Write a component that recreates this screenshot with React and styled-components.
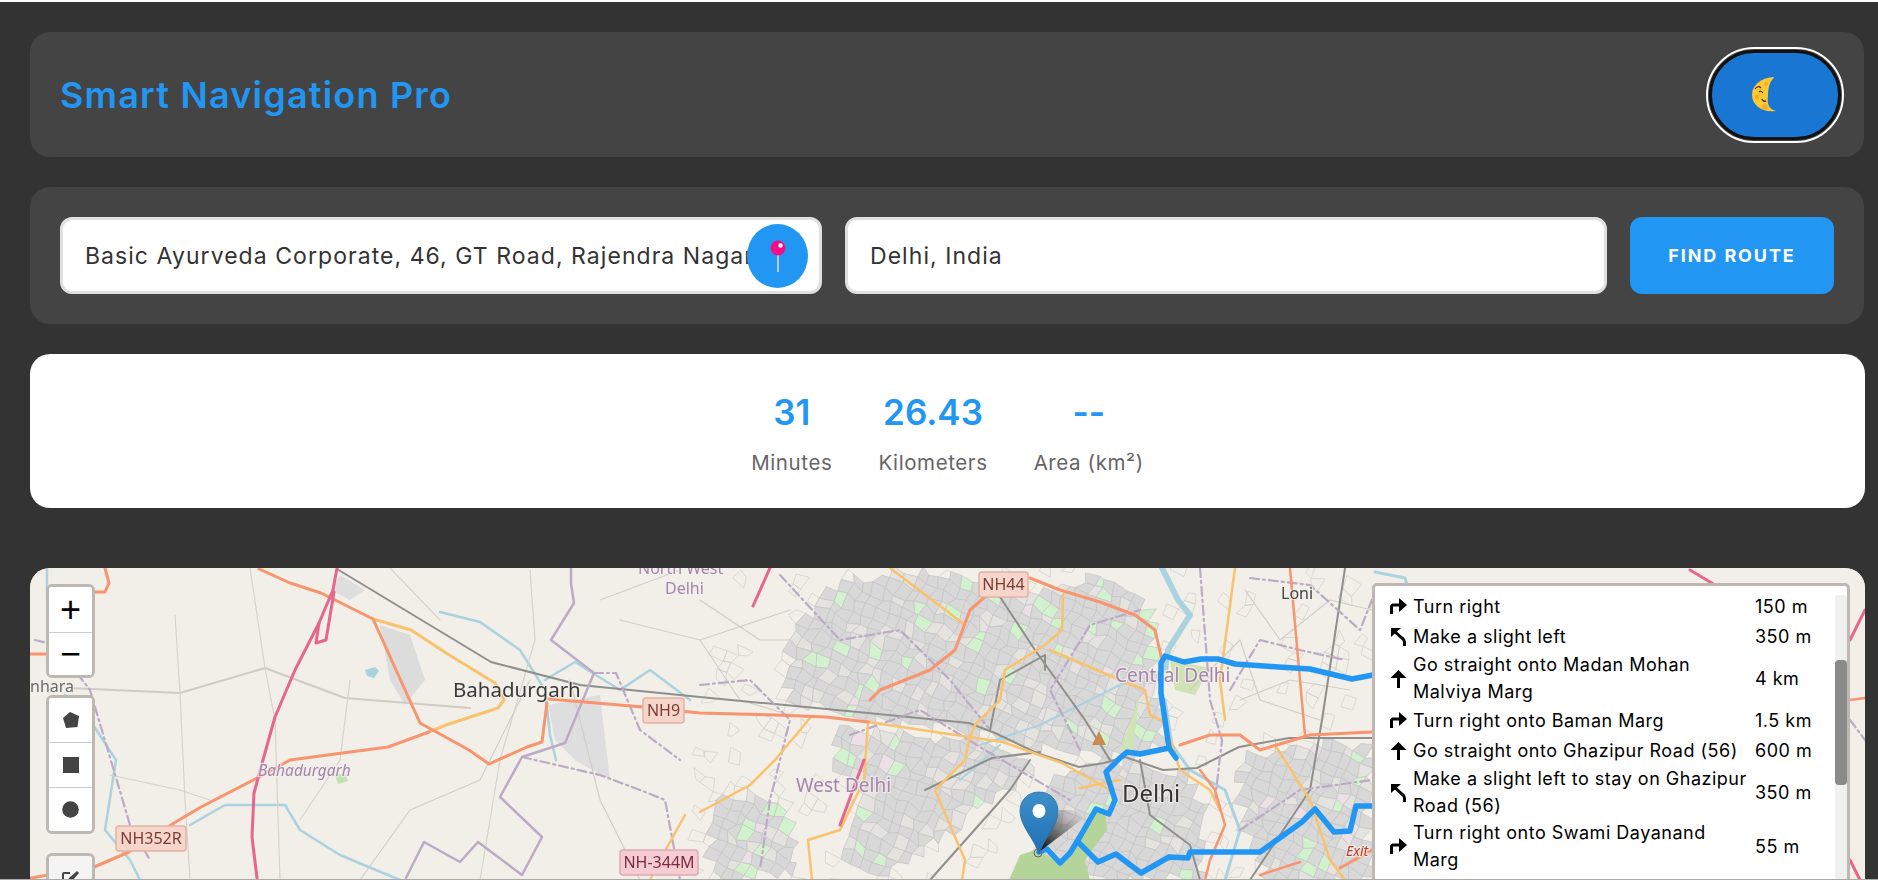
import { useMemo } from "react";
import styled, { createGlobalStyle } from "styled-components";

const FONT = `"Inter", "Noto Sans", sans-serif`;

const GlobalStyle = createGlobalStyle`
  html, body {
    margin: 0;
    padding: 0;
    background: #333;
    overflow: hidden;
  }
  * { box-sizing: border-box; }
`;

const Page = styled.div`
  width: 1878px;
  height: 880px;
  overflow: hidden;
  background: #333;
  border-top: 2px solid #fff;
  border-bottom: 1px solid #aaa;
  padding: 30px 13px 0 30px;
  display: flex;
  flex-direction: column;
  gap: 30px;
  font-family: ${FONT};
`;

const Panel = styled.div`
  flex: none;
  background: #444;
  border-radius: 20px;
  display: flex;
  align-items: center;
  padding: 0 30px;
  margin-right: 1px;
`;

const Header = styled(Panel)`
  height: 125px;
  justify-content: space-between;
  padding-right: 23px;
`;

const Title = styled.h1`
  margin: 0;
  font-size: 36px;
  font-weight: 600;
  letter-spacing: 1.2px;
  color: #2196f3;
`;

const ThemeToggle = styled.button`
  width: 132px;
  height: 90px;
  padding: 0 0 0 39px;
  display: flex;
  align-items: center;
  border: 3px solid #111;
  border-radius: 45px;
  outline: 2px solid #fff;
  outline-offset: 1px;
  background: #1976d2;
`;

const SearchBar = styled(Panel)`
  height: 137px;
  gap: 23px;
`;

const Field = styled.div`
  position: relative;
  flex: none;
  width: 762px;
  height: 77px;
`;

const Input = styled.input`
  width: 100%;
  height: 100%;
  border: 3px solid #e0e0e0;
  border-radius: 12px;
  background: #fff;
  padding: 0 ${(props) => (props.$pinned ? "71px" : "20px")} 0 22px;
  font-family: ${FONT};
  font-size: 23px;
  letter-spacing: 1.05px;
  color: #333;
  outline: none;
`;

const PinButton = styled.button`
  position: absolute;
  top: 7px;
  right: 14px;
  width: 61px;
  height: 64px;
  padding: 0;
  border: none;
  border-radius: 50%;
  background: #2196f3;
  display: flex;
  align-items: center;
  justify-content: center;
`;

const FindButton = styled.button`
  flex: none;
  width: 204px;
  height: 77px;
  border: none;
  border-radius: 12px;
  background: #2196f3;
  color: #fff;
  font-family: ${FONT};
  font-size: 18px;
  font-weight: 700;
  letter-spacing: 1.9px;
`;

const Stats = styled.div`
  flex: none;
  height: 154px;
  background: #fff;
  border-radius: 20px;
  display: flex;
  justify-content: center;
  gap: 46px;
  padding-top: 33px;
`;

const Stat = styled.div`
  display: flex;
  flex-direction: column;
  align-items: center;
`;

const StatValue = styled.div`
  font-size: 35px;
  line-height: 50px;
  font-weight: 600;
  color: #2196f3;
`;

const StatLabel = styled.div`
  margin-top: 11px;
  font-size: 20.5px;
  letter-spacing: 0.6px;
  line-height: 30px;
  color: #666;
`;

const MapFrame = styled.div`
  position: relative;
  flex: none;
  margin-top: 30px;
  height: 340px;
  border-radius: 20px 20px 0 0;
  overflow: hidden;
  background: #f2efe9;
`;

const MapCanvas = styled.svg`
  display: block;
  width: 100%;
  height: 100%;
  filter: blur(0.7px);
`;

const Controls = styled.div`
  position: absolute;
  top: 16px;
  left: 16px;
  display: flex;
  flex-direction: column;
  gap: 17px;
`;

const ControlGroup = styled.div`
  width: 49px;
  margin-top: ${(props) => props.$top || 0}px;
  border: 3px solid #bdb9b2;
  border-radius: 6px;
  background: #fff;
  overflow: hidden;
`;

const ControlButton = styled.div`
  height: ${(props) => props.$h}px;
  display: flex;
  align-items: center;
  justify-content: center;
  background: ${(props) => (props.$muted ? "#f4f4f4" : "#fff")};
  color: #000;
  font-family: "Liberation Sans", sans-serif;
  font-size: 36px;
  & + & {
    border-top: 1px solid #ccc;
  }
`;

const RoutePanel = styled.div`
  position: absolute;
  top: 15px;
  left: 1342px;
  width: 478px;
  height: 320px;
  display: flex;
  background: #fff;
  border: 3px solid #bdb9b2;
  border-radius: 5px 5px 0 0;
  padding: 5px 0 0 15px;
  color: #000;
  font-size: 18px;
  letter-spacing: 0.5px;
`;

const RouteList = styled.div`
  flex: 1;
  display: flex;
  flex-direction: column;
`;

const RouteRow = styled.div`
  display: grid;
  grid-template-columns: 23px 342px 1fr;
  align-items: center;
  min-height: 30px;
`;

const RouteText = styled.div`
  line-height: 27px;
  white-space: nowrap;
`;

const Distance = styled.div`
  line-height: 27px;
  white-space: nowrap;
`;

const ScrollTrack = styled.div`
  flex: none;
  width: 12px;
  margin-top: 4px;
  background: #f0f0f0;
  border-radius: 3px;
  padding-top: 65px;
`;

const ScrollThumb = styled.div`
  height: 125px;
  background: #8a8a8a;
  border-radius: 4px;
`;

// main roads and lines, in page pixels
const LINES = [
  // rivers and canals
  ["#aad3df", 2.5, null, "47,568 47,600 62,610"],
  ["#aad3df", 2.5, null, "440,612 480,622 520,650 545,690 550,735 556,760"],
  ["#aad3df", 2.5, null, "65,695 90,720 116,760 105,830 130,860 140,880"],
  ["#aad3df", 2.5, null, "190,825 225,805 285,805 300,830 340,855 400,880"],
  ["#aad3df", 2.5, null, "545,680 575,662 620,690 650,670 690,700"],
  ["#aad3df", 6, null, "1162,568 1178,600 1190,615 1168,650 1165,670"],
  ["#aad3df", 3, null, "1165,700 1172,745 1190,770 1225,790 1240,830 1225,880"],
  ["#aad3df", 3, null, "1375,572 1405,578 1412,600"],
  ["#aad3df", 2, null, "980,745 1040,725 1090,700 1130,680"],
  ["#aad3df", 2, null, "960,780 1000,745"],
  // minor grey roads outside the city
  ["#cfccc6", 2, null, "70,688 180,693 265,668 345,698 470,708"],
  ["#d6d3cd", 1.2, null, "250,568 265,668 275,720 280,880"],
  ["#d6d3cd", 1.2, null, "175,615 180,693 185,800 190,880"],
  ["#d6d3cd", 1.2, null, "530,570 535,640 500,760 480,880"],
  ["#cfcfc9", 1.2, null, "530,680 480,780 410,810 360,880"],
  ["#cfcfc9", 1.2, null, "570,680 600,800 640,880"],
  ["#d6d3cd", 1.2, null, "110,775 180,790 210,800"],
  ["#d6d3cd", 1.2, null, "390,568 440,620"],
  ["#d6d3cd", 1.2, null, "350,680 340,760 300,820"],
  ["#cfcfc9", 1.2, null, "600,600 680,570"],
  ["#cfcfc9", 1.2, null, "620,620 700,640 790,610"],
  ["#cfcfc9", 1.2, null, "1245,590 1280,640 1330,600 1372,610"],
  ["#cfcfc9", 1.2, null, "1240,700 1290,680 1350,690"],
  ["#cfcfc9", 1.2, null, "1190,690 1240,640 1260,700 1320,720"],
  ["#cfcfc9", 1.2, null, "700,600 760,640 790,640"],
  ["#cfcfc9", 1.2, null, "700,640 740,700 780,712"],
  // rail
  ["#8f8f8c", 2, null, "337,569 491,662 580,685 700,697 868,713 969,723 995,733 1037,753 1079,767 1104,763 1125,757 1163,770 1197,768 1239,747 1289,738 1372,738"],
  ["#8f8f8c", 2, null, "1000,597 1035,650 1085,720 1110,760"],
  ["#8f8f8c", 2, null, "925,790 992,758 1040,752"],
  ["#8f8f8c", 2, null, "930,880 1010,790 1030,760"],
  ["#8f8f8c", 2, null, "1345,568 1322,720 1310,790 1250,880"],
  ["#8f8f8c", 2, null, "990,730 1000,680 1045,655 1045,670"],
  ["#8f8f8c", 2, null, "1140,760 1150,815 1190,845 1200,880"],
  // admin boundaries
  ["#bcaac6", 2.5, null, "571,568 571,583 574,603 551,640 594,673 565,743 522,757 500,797 542,837 522,875 478,842 460,862 424,842 406,878"],
  ["#bcaac6", 2.2, "9 4 2 4", "35,640 55,645 90,690 130,825 150,860"],
  ["#bcaac6", 2.2, "9 4 2 4", "522,757 600,775 640,790 665,800 680,880"],
  ["#bcaac6", 2.2, "9 4 2 4", "594,673 616,673 640,730 680,760"],
  ["#bcaac6", 2.2, "9 4 2 4", "700,685 750,680 790,720 770,800 760,870"],
  ["#bcaac6", 2.2, "9 4 2 4", "780,575 840,640 900,630 950,680 990,730"],
  ["#bcaac6", 2.2, "9 4 2 4", "850,735 920,710 985,750 1070,800"],
  ["#bcaac6", 2.2, "9 4 2 4", "1080,750 1050,690 1090,625 1140,610"],
  ["#bcaac6", 2.2, "9 4 2 4", "1200,568 1210,700 1222,740 1215,800"],
  ["#bcaac6", 2.2, "9 4 2 4", "1250,578 1310,585 1360,630 1372,600"],
  ["#bcaac6", 2.2, "9 4 2 4", "1230,690 1260,640 1300,650 1345,660"],
  ["#bcaac6", 2.2, "9 4 2 4", "1240,830 1300,790 1372,780"],
  ["#bcaac6", 2.2, "9 4 2 4", "1850,720 1865,740"],
  // secondary (yellow)
  ["#f9c26d", 3, null, "373,619 411,630 446,653 495,683 504,700 498,708 446,725 429,732"],
  ["#f9c26d", 2.5, null, "868,722 969,737 1003,742 1062,763 1110,790"],
  ["#f9c26d", 2.5, null, "890,568 965,625"],
  ["#f9c26d", 2.5, null, "1063,595 1062,630 1045,645 1005,670 1000,700 975,725 969,740 965,760 935,790 965,860 962,880"],
  ["#f9c26d", 2.5, null, "1050,650 1120,680 1145,690 1150,715 1165,722 1180,770 1210,790 1220,810"],
  ["#f9c26d", 2.5, null, "868,722 864,780 840,830 808,840 812,880"],
  ["#f9c26d", 2.5, null, "810,718 775,760 750,785 700,812"],
  ["#f9c26d", 2.5, null, "1235,568 1220,680 1225,720"],
  ["#f9c26d", 2.5, null, "1275,745 1310,800 1330,860 1345,880"],
  ["#f9c26d", 2.5, null, "685,815 660,860 650,880"],
  ["#f9c26d", 2.5, null, "1080,788 1120,780"],
  // trunk (orange)
  ["#f8946e", 3, null, "105,568 109,583 105,592 94,592"],
  ["#f8946e", 3, null, "30,654 47,654"],
  ["#f8946e", 3, null, "259,569 290,583 321,593 373,619 420,723 469,750 489,764 527,747 542,742 547,703"],
  ["#f8946e", 3, null, "549,699 643,707 700,713 776,715 826,717 868,722"],
  ["#f8946e", 3, null, "429,732 388,747 290,760 259,777 201,807 174,823 129,852 94,867 31,878"],
  ["#f8946e", 3, null, "1030,578 1060,590 1100,602 1135,615 1155,630 1162,660"],
  ["#f8946e", 3, null, "870,700 880,690 930,670 955,650 970,610 985,597 1000,590"],
  ["#f8946e", 3, null, "1180,745 1210,735 1240,735 1260,750 1310,735 1372,732"],
  ["#f8946e", 2.5, null, "1290,568 1300,680 1305,735"],
  ["#f8946e", 2.5, null, "1200,770 1215,790 1225,825 1210,860 1205,880"],
  ["#f8946e", 2.5, null, "1260,875 1300,862"],
  ["#f8946e", 2.5, null, "1850,700 1865,698"],
  ["#f8946e", 3, null, "1340,868 1372,850"],
  // motorway (pink)
  ["#e8668c", 3, null, "337,568 333,590 319,623 295,670 275,717 263,760 254,793 252,837 257,878"],
  ["#e8668c", 3, null, "334,592 326,640 316,643 319,623"],
  ["#e8668c", 3, null, "770,568 753,606"],
  ["#e8668c", 3, null, "864,760 840,825"],
  ["#e8668c", 3, null, "1850,640 1865,610"],
  ["#e8668c", 3, null, "1690,570 1715,585"],
  ["#e8668c", 3, null, "1850,860 1860,880"],
];

const ROUTE = [
  "1039,852 1047,849 1060,863 1070,853 1081,835 1096,809 1109,814 1115,800 1106,772 1121,757 1127,752 1140,754 1169,748 1176,758",
  "1169,748 1165,720 1161,693 1161,663 1165,656 1184,662 1201,659 1218,659 1235,664 1310,669 1352,679 1373,675",
  "1079,843 1098,862 1116,854 1141,873 1169,857 1188,858 1190,852 1260,852 1302,822 1315,809 1334,832 1350,831 1356,806 1373,806",
];

const SHIELDS = [
  { x: 979, y: 572, w: 49, label: "NH44", fill: "#f6d6ca", line: "#e2b3a4", color: "#7c3b32" },
  { x: 643, y: 698, w: 41, label: "NH9", fill: "#f6d6ca", line: "#e2b3a4", color: "#7c3b32" },
  { x: 116, y: 826, w: 70, label: "NH352R", fill: "#f6d6ca", line: "#e2b3a4", color: "#7c3b32" },
  { x: 620, y: 850, w: 78, label: "NH-344M", fill: "#f4ccd2", line: "#dfa9b3", color: "#7d2b3e" },
];

const LABELS = [
  { x: 453, y: 697, size: 20.5, color: "#3a3a3a", text: "Bahadurgarh" },
  { x: 30, y: 692, size: 16, color: "#6a6a6a", text: "nhara" },
  { x: 258, y: 776, size: 15.5, color: "#a584ad", italic: true, text: "Bahadurgarh" },
  { x: 638, y: 574, size: 16, color: "#a584ad", text: "North West" },
  { x: 665, y: 594, size: 16, color: "#a584ad", text: "Delhi" },
  { x: 796, y: 792, size: 19, color: "#a584ad", text: "West Delhi" },
  { x: 1115, y: 682, size: 19, color: "#a584ad", text: "Central Delhi" },
  { x: 1122, y: 802, size: 24, color: "#333", text: "Delhi" },
  { x: 1281, y: 599, size: 16, color: "#444", text: "Loni" },
  { x: 1346, y: 856, size: 14, color: "#c0392b", italic: true, text: "Exit" },
];

// built-up areas of the city
const URBAN = [
  [[790, 640], [830, 590], [900, 570], [1020, 590], [1060, 590], [1090, 570], [1150, 610], [1160, 700], [1165, 745], [1130, 757], [1040, 750], [985, 735], [880, 720], [790, 700]],
  [[835, 725], [985, 745], [1040, 765], [990, 800], [930, 850], [880, 880], [840, 860], [860, 800], [835, 770]],
  [[712, 810], [750, 790], [790, 810], [795, 870], [712, 880]],
  [[1060, 770], [1120, 760], [1180, 775], [1205, 800], [1200, 880], [1050, 880], [1030, 820]],
  [[1240, 760], [1300, 745], [1372, 745], [1372, 880], [1270, 880], [1240, 830]],
];

const inside = (poly, x, y) => {
  let hit = false;
  for (let i = 0, j = poly.length - 1; i < poly.length; j = i++) {
    const [xi, yi] = poly[i];
    const [xj, yj] = poly[j];
    if (yi > y !== yj > y && x < ((xj - xi) * (y - yi)) / (yj - yi) + xi) hit = !hit;
  }
  return hit;
};

// seeded so the city looks the same on every render
const makeCity = () => {
  let seed = 7321;
  const rnd = () => {
    seed = (seed * 1664525 + 1013904223) % 4294967296;
    return seed / 4294967296;
  };
  const step = 11;
  const cols = 96;
  const rows = 72;
  const angle = 0.42;
  const grid = [];
  for (let r = 0; r <= rows; r++) {
    const row = [];
    for (let c = 0; c <= cols; c++) {
      const u = (c - cols / 2) * step;
      const v = (r - rows / 2) * step;
      row.push([
        1040 + u * Math.cos(angle) - v * Math.sin(angle) + (rnd() - 0.5) * 7,
        730 + u * Math.sin(angle) + v * Math.cos(angle) + (rnd() - 0.5) * 7,
      ]);
    }
    grid.push(row);
  }
  const cells = [];
  for (let r = 0; r < rows; r++) {
    for (let c = 0; c < cols; c++) {
      const a = grid[r][c];
      const b = grid[r][c + 1];
      const d = grid[r + 1][c + 1];
      const e = grid[r + 1][c];
      const cx = (a[0] + d[0]) / 2;
      const cy = (a[1] + d[1]) / 2;
      const points = [a, b, d, e].map((p) => p.join(",")).join(" ");
      const pick = rnd();
      if (URBAN.some((poly) => inside(poly, cx, cy))) {
        let fill = "#d8d8d8";
        if (pick > 0.93) fill = "#d2f2cd";
        else if (pick > 0.78) fill = "#e4e3df";
        else if (pick > 0.76) fill = "#ecdfe6";
        cells.push({ points, fill, line: "#c4c4c4" });
      } else if (cx > 690 && cx < 1372 && cy > 568 && pick > 0.86) {
        // thin suburban streets around the city
        cells.push({ points, fill: "none", line: "#d0cec9" });
      }
    }
  }
  return cells;
};

const MapArt = () => {
  const cells = useMemo(makeCity, []);
  return (
    <MapCanvas viewBox="30 568 1835 340" preserveAspectRatio="xMinYMin slice">
      <rect x="30" y="568" width="1835" height="340" fill="#f2efe9" />
      {/* industrial patches around Bahadurgarh */}
      <path d="M380 625 L410 635 L425 680 L405 705 L390 680Z" fill="#dcdcdc" />
      <path d="M548 705 L600 695 L610 780 L575 760 L555 740Z" fill="#dedede" />
      <path d="M340 575 L365 590 L350 600 L330 590Z" fill="#dedede" />
      {cells.map((cell, i) => (
        <polygon key={i} points={cell.points} fill={cell.fill} stroke={cell.line} strokeWidth="0.7" />
      ))}
      {/* the ridge park under the marker */}
      <path d="M1009 880 L1020 855 L1035 850 L1060 862 L1080 835 L1095 808 L1105 812 L1107 830 L1085 860 L1090 880Z" fill="#b5d49a" />
      <path d="M1170 660 L1210 668 L1195 695 L1175 690Z" fill="#cfe3b4" />
      <path d="M1135 710 L1140 690 L1133 750 L1120 750Z" fill="#cfe3b4" />
      {LINES.map(([color, width, dash, points], i) => (
        <polyline
          key={i}
          points={points}
          fill="none"
          stroke={color}
          strokeWidth={width}
          strokeDasharray={dash || undefined}
          strokeLinejoin="round"
          strokeLinecap="round"
        />
      ))}
      <path d="M1092 745 L1099 731 L1106 745Z" fill="#c98b52" />
      {/* small ponds */}
      <path d="M365 670 l10 -3 l4 4 l-5 7 l-7 -2Z" fill="#a9d3df" />
      <path d="M335 775 l10 -2 l3 8 l-10 3Z" fill="#bfe3b0" />
      {SHIELDS.map((s) => (
        <g key={s.label}>
          <rect x={s.x} y={s.y} width={s.w} height="25" rx="3" fill={s.fill} stroke={s.line} strokeWidth="1.5" />
          <text
            x={s.x + s.w / 2}
            y={s.y + 18}
            textAnchor="middle"
            fontFamily="Noto Sans, sans-serif"
            fontSize="16"
            fill={s.color}
          >
            {s.label}
          </text>
        </g>
      ))}
      {LABELS.map((l) => (
        <text
          key={l.text + l.x}
          x={l.x}
          y={l.y}
          fontFamily="Noto Sans, sans-serif"
          fontSize={l.size}
          fontStyle={l.italic ? "italic" : "normal"}
          fill={l.color}
          stroke="#f2efe9"
          strokeWidth="2.5"
          strokeOpacity="0.75"
          paintOrder="stroke"
        >
          {l.text}
        </text>
      ))}
      {ROUTE.map((points, i) => (
        <polyline
          key={i}
          points={points}
          fill="none"
          stroke="#2196f3"
          strokeWidth="5.5"
          strokeLinejoin="round"
          strokeLinecap="round"
        />
      ))}
      {/* default leaflet marker with its shadow */}
      <defs>
        <linearGradient id="markerBlue" x1="0" y1="0" x2="0" y2="1">
          <stop offset="0" stopColor="#3f8fc9" />
          <stop offset="1" stopColor="#1f6fb4" />
        </linearGradient>
        <linearGradient id="markerShadow" x1="0" y1="1" x2="1" y2="0">
          <stop offset="0.1" stopColor="#111" stopOpacity="0.95" />
          <stop offset="0.95" stopColor="#444" stopOpacity="0" />
        </linearGradient>
      </defs>
      <path d="M1039 852 L1060 810 Q1078 808 1084 818 Z" fill="url(#markerShadow)" />
      <path
        d="M1039 854 C1034 838 1020 826 1020 811 C1020 800 1028 792 1039 792 C1050 792 1058 800 1058 811 C1058 826 1044 838 1039 854Z"
        fill="url(#markerBlue)"
        stroke="#2a6ea6"
        strokeWidth="0.8"
      />
      <ellipse cx="1039" cy="811" rx="6.5" ry="7" fill="#fff" />
      <circle cx="1038" cy="853" r="4" fill="none" stroke="#666" strokeWidth="1" />
    </MapCanvas>
  );
};

const Moon = () => (
  <svg width="26" height="37" viewBox="0 0 26 37">
    <path d="M22 1 C10 2 1 9 1 19 C1 29 11 37 25 35 C17 33 16 27 17 19 C17 11 19 5 23 2Z" fill="#fdc92f" />
    <circle cx="6" cy="21" r="2.4" fill="#f2ad2a" />
    <circle cx="15" cy="8" r="2" fill="#f2ad2a" />
    <circle cx="14" cy="31" r="2.8" fill="#f2ad2a" />
    <path d="M4 13 Q7 9 10 12" fill="none" stroke="#3d2a55" strokeWidth="1.2" />
    <path d="M8 16 Q10 14 12 17" fill="none" stroke="#3d2a55" strokeWidth="1.2" />
    <path d="M11 23 Q12 26 15 25" fill="none" stroke="#3d2a55" strokeWidth="1.4" />
  </svg>
);

const Pushpin = () => (
  <svg width="20" height="34" viewBox="0 0 20 34">
    <rect x="9" y="12" width="2" height="21" fill="#bcc6cf" />
    <circle cx="10" cy="9" r="7.5" fill="#f50f87" />
    <circle cx="12.5" cy="6.5" r="2.2" fill="#fff" />
  </svg>
);

const TurnIcon = ({ kind }) => {
  if (kind === "right") {
    return (
      <svg width="17" height="18" viewBox="0 0 17 18">
        <path d="M1.5 17V9.5a1.5 1.5 0 0 1 1.5-1.5H10" fill="none" stroke="#000" strokeWidth="3" />
        <path d="M9 1 L17 8 L9 15Z" fill="#000" />
      </svg>
    );
  }
  if (kind === "left") {
    return (
      <svg width="17" height="19" viewBox="0 0 17 19">
        <path d="M3 3 L12 11 Q14.5 13 14.5 15 V19" fill="none" stroke="#000" strokeWidth="3" />
        <path d="M1 1 H11 L1 10Z" fill="#000" />
      </svg>
    );
  }
  return (
    <svg width="17" height="19" viewBox="0 0 17 19">
      <path d="M8.5 6V19" fill="none" stroke="#000" strokeWidth="3" />
      <path d="M0.5 9 L8.5 1 L16.5 9Z" fill="#000" />
    </svg>
  );
};

const STEPS = [
  { icon: "right", lines: ["Turn right"], dist: "150 m" },
  { icon: "left", lines: ["Make a slight left"], dist: "350 m" },
  { icon: "up", lines: ["Go straight onto Madan Mohan", "Malviya Marg"], dist: "4 km" },
  { icon: "right", lines: ["Turn right onto Baman Marg"], dist: "1.5 km" },
  { icon: "up", lines: ["Go straight onto Ghazipur Road (56)"], dist: "600 m" },
  { icon: "left", lines: ["Make a slight left to stay on Ghazipur", "Road (56)"], dist: "350 m" },
  { icon: "right", lines: ["Turn right onto Swami Dayanand", "Marg"], dist: "55 m" },
];

const App = () => {
  return (
    <Page>
      <GlobalStyle />
      <Header>
        <Title>Smart Navigation Pro</Title>
        <ThemeToggle aria-label="Toggle theme">
          <Moon />
        </ThemeToggle>
      </Header>
      <SearchBar>
        <Field>
          <Input $pinned readOnly value="Basic Ayurveda Corporate, 46, GT Road, Rajendra Nagar" />
          <PinButton aria-label="Use my location">
            <Pushpin />
          </PinButton>
        </Field>
        <Field>
          <Input readOnly value="Delhi, India" />
        </Field>
        <FindButton>FIND ROUTE</FindButton>
      </SearchBar>
      <Stats>
        <Stat>
          <StatValue>31</StatValue>
          <StatLabel>Minutes</StatLabel>
        </Stat>
        <Stat>
          <StatValue>26.43</StatValue>
          <StatLabel>Kilometers</StatLabel>
        </Stat>
        <Stat>
          <StatValue>--</StatValue>
          <StatLabel>Area (km²)</StatLabel>
        </Stat>
      </Stats>
      <MapFrame>
        <MapArt />
        <Controls>
          <ControlGroup>
            <ControlButton $h={45}>+</ControlButton>
            <ControlButton $h={43}>−</ControlButton>
          </ControlGroup>
          <ControlGroup>
            <ControlButton $h={44}>
              <svg width="18" height="18" viewBox="0 0 18 18">
                <path d="M8 1 L17 5 L15.5 16 L4 17 L1 7Z" fill="#444" />
              </svg>
            </ControlButton>
            <ControlButton $h={45}>
              <svg width="16" height="16" viewBox="0 0 16 16">
                <rect width="16" height="16" fill="#444" />
              </svg>
            </ControlButton>
            <ControlButton $h={44}>
              <svg width="17" height="17" viewBox="0 0 17 17">
                <circle cx="8.5" cy="8.5" r="8.3" fill="#444" />
              </svg>
            </ControlButton>
          </ControlGroup>
          <ControlGroup $top={2}>
            <ControlButton $h={45} $muted>
              <svg width="20" height="20" viewBox="0 0 20 20">
                <path d="M9 4H3a1 1 0 0 0-1 1v12a1 1 0 0 0 1 1h12a1 1 0 0 0 1-1v-6" fill="none" stroke="#444" strokeWidth="2" />
                <path d="M7 13l1-4 8-7 2 2-7 8Z" fill="#444" />
              </svg>
            </ControlButton>
          </ControlGroup>
        </Controls>
        <RoutePanel>
          <RouteList>
            {STEPS.map((step, i) => (
              <RouteRow key={i}>
                <TurnIcon kind={step.icon} />
                <RouteText>
                  {step.lines.map((line) => (
                    <div key={line}>{line}</div>
                  ))}
                </RouteText>
                <Distance>{step.dist}</Distance>
              </RouteRow>
            ))}
          </RouteList>
          <ScrollTrack>
            <ScrollThumb />
          </ScrollTrack>
        </RoutePanel>
      </MapFrame>
    </Page>
  );
};

export default App;
